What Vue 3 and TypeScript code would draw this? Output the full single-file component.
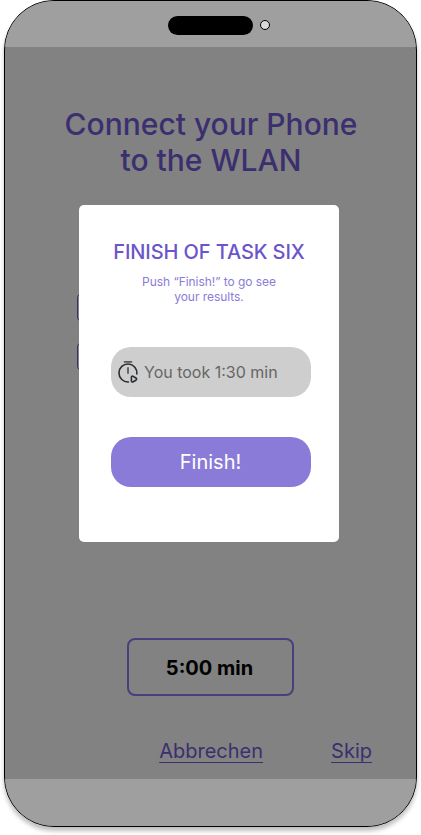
<script setup lang="ts">
import { ref } from 'vue'

const elapsed = ref('1:30 min')
const limit = ref('5:00 min')
const fields = ['network', 'password']
</script>

<template>
  <main class="phone">
    <header class="bar top">
      <span class="island"></span>
      <span class="camera"></span>
    </header>

    <section class="screen">
      <h1>Connect your Phone<br />to the WLAN</h1>
      <div class="fields">
        <div v-for="field in fields" :key="field" class="field"></div>
      </div>
      <div class="timer">{{ limit }}</div>
      <nav class="links">
        <a class="link">Abbrechen</a>
        <a class="link">Skip</a>
      </nav>
    </section>

    <footer class="bar bottom"></footer>

    <div class="dialog" role="dialog">
      <h2>FINISH OF TASK SIX</h2>
      <p class="hint">Push “Finish!” to go see<br />your results.</p>
      <div class="result">
        <svg class="clock" width="24" height="26" viewBox="0 0 24 26" fill="none">
          <path class="muted" d="M8.6 2.9h6.8M12 9v5" />
          <path d="M20.9 15A9 9 0 1 0 12.4 23" />
          <path d="M15.4 18.3v3.4c0 1.2.9 1.6 1.8 1.1l2.7-1.6c.9-.6.9-1.6 0-2.2l-2.7-1.6c-.9-.5-1.8-.1-1.8.9z" />
        </svg>
        <span>You took {{ elapsed }}</span>
      </div>
      <button class="finish" type="button">Finish!</button>
    </div>
  </main>
</template>

<style>
body {
  min-height: 835px;
  background: #fff;
}
</style>

<style scoped>
.phone {
  position: relative;
  box-sizing: border-box;
  width: 413px;
  height: 827px;
  margin-left: 4px;
  display: flex;
  flex-direction: column;
  overflow: hidden;
  border: 1px solid #000;
  border-radius: 50px;
  background: #828282;
  box-shadow: 0 4px 4px rgba(0, 0, 0, 0.25);
  font-family: Inter, "Liberation Sans", sans-serif;
}

.bar {
  flex: none;
  background: #9f9f9f;
}

.top {
  box-sizing: border-box;
  height: 46px;
  display: flex;
  gap: 7px;
  padding: 15px 0 0 163px;
}

.island {
  width: 85px;
  height: 19px;
  border-radius: 10px;
  background: #000;
}

.camera {
  box-sizing: border-box;
  width: 10px;
  height: 10px;
  margin-top: 4px;
  border: 1px solid #000;
  border-radius: 50%;
  background: #d9d9d9;
}

.bottom {
  height: 47px;
}

.screen {
  flex: 1;
  display: flex;
  flex-direction: column;
  align-items: center;
  color: #3b2f6f;
}

h1 {
  margin: 59px 0 0 1px;
  font-size: 30px;
  font-weight: 500;
  line-height: 36px;
  text-align: center;
}

.fields {
  align-self: flex-start;
  display: flex;
  flex-direction: column;
  gap: 20px;
  margin: 115px 0 0 72px;
}

.field {
  box-sizing: border-box;
  width: 255px;
  height: 29px;
  border: 1px solid #3b2f6f;
  border-radius: 5px;
}

.timer {
  box-sizing: border-box;
  width: 167px;
  height: 58px;
  margin-top: 267px;
  padding-right: 2px;
  border: 2px solid #4a3f7b;
  border-radius: 8px;
  color: #000;
  font-size: 20px;
  font-weight: 700;
  line-height: 56px;
  text-align: center;
}

.links {
  align-self: stretch;
  display: flex;
  justify-content: flex-end;
  gap: 68px;
  margin-top: 43px;
  padding-right: 44px;
}

.link {
  font-size: 20px;
  font-weight: 400;
  line-height: 24px;
  text-decoration: underline;
  text-decoration-thickness: 1px;
  text-underline-offset: 4px;
}

.dialog {
  position: absolute;
  top: 204px;
  left: 74px;
  box-sizing: border-box;
  width: 260px;
  height: 337px;
  display: flex;
  flex-direction: column;
  align-items: center;
  padding: 35px 28px 0 32px;
  border-radius: 5px;
  background: #fff;
}

h2 {
  margin: 0 4px 0 0;
  color: #6a55cb;
  font-size: 20px;
  font-weight: 500;
  line-height: 24px;
  letter-spacing: -0.1px;
  white-space: nowrap;
}

.hint {
  margin: 10px 4px 0 0;
  color: #8b7bd8;
  font-size: 12px;
  font-weight: 400;
  line-height: 15px;
  letter-spacing: -0.05px;
  text-align: center;
}

.result {
  box-sizing: border-box;
  width: 200px;
  height: 50px;
  display: flex;
  align-items: center;
  gap: 4px;
  margin-top: 43px;
  padding-left: 5px;
  border-radius: 20px;
  background: #cecece;
  color: #666;
  font-size: 16px;
  white-space: nowrap;
}

.clock {
  flex: none;
  stroke: #292d32;
  stroke-width: 1.6;
  stroke-linecap: round;
  stroke-linejoin: round;
}

.muted {
  stroke: #575a5f;
  stroke-width: 1.8;
}

.finish {
  width: 200px;
  height: 50px;
  margin-top: 40px;
  padding: 0 1px 0 0;
  border: 0;
  border-radius: 20px;
  background: #8b7bd8;
  color: #fff;
  font: 400 20px Inter, "Liberation Sans", sans-serif;
}
</style>
